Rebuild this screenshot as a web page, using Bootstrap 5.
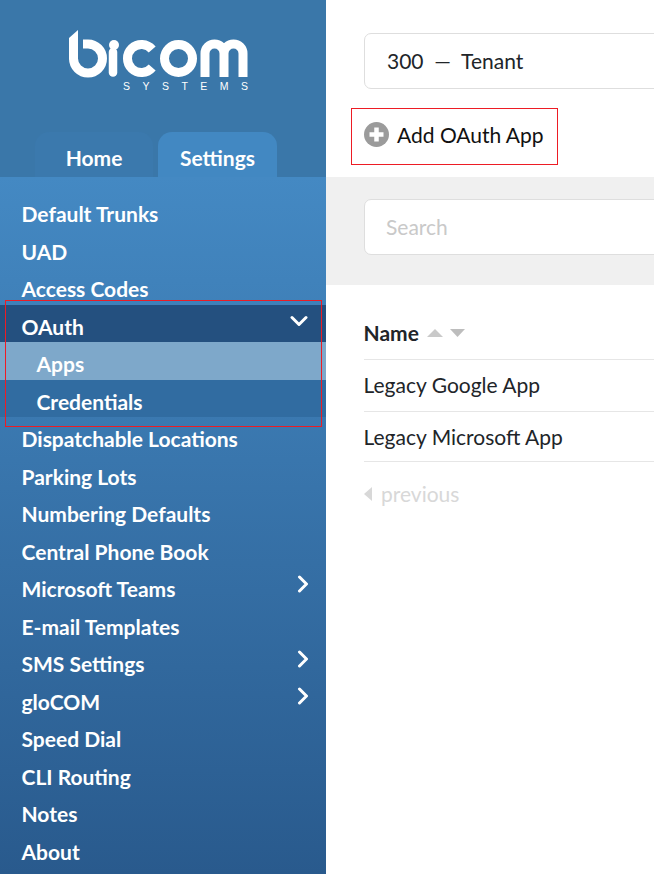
<!DOCTYPE html>
<html lang="en">
<head>
<meta charset="utf-8">
<title>OAuth Apps</title>
<link href="https://cdn.jsdelivr.net/npm/bootstrap@5.3.0/dist/css/bootstrap.min.css" rel="stylesheet">
<style>
html,body{height:100%;overflow:hidden}
body{font-family:Lato,"Liberation Sans",sans-serif;color:#212529;background:#fff}
.shell{height:874px;width:654px;overflow:hidden}
.side{width:326px;flex:none;position:relative;background:#3a77a9}
.brand{height:132px;padding-top:30px;padding-left:68px}
.brand svg{display:block}
.tabs-row{height:45px;padding-left:35px;gap:5px}
.side-tab{width:118px;height:45px;border-radius:14px 14px 0 0;color:#fff;font-weight:700;font-size:21px;line-height:52px;text-align:center;text-decoration:none;background:#3b79ad}
.side-tab.on{background:#4288c2;width:119px}
.menu-wrap{height:697px;padding-top:15px;background:linear-gradient(#4489c3,#295a8d)}
.menu-item{height:37.5px;line-height:30.5px;padding:7px 17px 0 21.5px;font-size:21px;font-weight:700;color:#fff;text-decoration:none;display:flex;justify-content:space-between;align-items:center}
.menu-item svg{flex:none;margin-top:-11px}
.menu-item.open{background:#24507f;padding-right:18px}
.menu-item.sub{padding-left:36.5px}
.menu-item.cur{background:#7ea8ca}
.menu-item.alt{background:#316ca1}
.redbox{position:absolute;border:1px solid #ed1c24;pointer-events:none}
.rb-a{left:5px;top:300px;width:317px;height:127px}
.rb-b{left:351px;top:108px;width:207px;height:57px}
.main-col{flex:1;position:relative;min-width:0}
.top-zone{height:177px;padding:33px 0 0 38px}
.pick{height:56px;margin-right:-20px;border:1px solid #dedede;border-radius:7px;padding-left:22px;font-size:21px;line-height:53px;color:#212529}
.add-row{margin-top:31px;gap:8px;font-size:21px;line-height:30px;color:#111;text-decoration:none;height:30px}
.add-row svg{margin-top:-2px}
.search-zone{height:108px;background:#f0f0f0;padding:22px 0 0 38px}
.finder{height:56px;margin-right:-20px;border:1px solid #dedede;border-radius:7px;background:#fff;padding-left:21px;font-size:21px;line-height:53px;color:#c9c9c9}
.list-zone{padding:0 0 0 38px}
.hdr{height:75px;border-bottom:1px solid #e6e6e6;font-weight:700;font-size:21px;align-items:center;gap:8px;padding-top:21px}
.hdr span{margin-left:-.5px}
.hdr svg{flex:none}
.line{height:52px;border-bottom:1px solid #e6e6e6;font-size:21px;line-height:49px;text-indent:-.5px}
.line.b{height:50px;line-height:50px}
.prev{margin-top:18px;font-size:21px;line-height:28px;color:#d8d8d8;gap:9px;align-items:center}
</style>
</head>
<body>
<div class="shell d-flex">
  <nav class="side">
    <div class="brand">
      <svg width="182" height="64" viewBox="0 0 182 64" role="img" aria-label="Bicom Systems logo">
        <path d="M1 8 L10 0 V29.500 H1Z" fill="#fff"/>
        <g fill="none" stroke="#fff" stroke-width="9">
          <path d="M15 14 H20 A14.500 14.500 0 1 1 5.500 28.500"/>
          <path d="M45 22 V42.500" stroke-width="8.500" stroke-linecap="round"/>
          <path d="M84.200 19.500 A14 14 0 1 0 84.200 37.500"/>
          <circle cx="110.500" cy="28.500" r="14"/>
          <path d="M137 47 V23.500 A9.500 9.500 0 0 1 156 23.500 V47 M156 23.500 A9.500 9.500 0 0 1 175 23.500 V47"/>
        </g>
        <circle cx="46" cy="15" r="5" fill="#fff"/>
        <text x="55" y="60" font-family="Liberation Sans, sans-serif" font-size="10.500" fill="#fff" textLength="125" lengthAdjust="spacing">SYSTEMS</text>
      </svg>
    </div>
    <div class="tabs-row d-flex">
      <a class="side-tab" href="#">Home</a>
      <a class="side-tab on" href="#">Settings</a>
    </div>
    <div class="menu-wrap">
      <a class="menu-item" href="#">Default Trunks</a>
      <a class="menu-item" href="#">UAD</a>
      <a class="menu-item" href="#">Access Codes</a>
      <a class="menu-item open" href="#">OAuth
        <svg width="18" height="12" viewBox="0 0 18 12"><path d="M2 2.500 L9 9.500 L16 2.500" fill="none" stroke="#fff" stroke-width="3" stroke-linecap="round" stroke-linejoin="round"/></svg></a>
      <a class="menu-item sub cur" href="#">Apps</a>
      <a class="menu-item sub alt" href="#">Credentials</a>
      <a class="menu-item" href="#">Dispatchable Locations</a>
      <a class="menu-item" href="#">Parking Lots</a>
      <a class="menu-item" href="#">Numbering Defaults</a>
      <a class="menu-item" href="#">Central Phone Book</a>
      <a class="menu-item" href="#">Microsoft Teams
        <svg width="12" height="18" viewBox="0 0 12 18"><path d="M2.500 2 L9.500 9 L2.500 16" fill="none" stroke="#fff" stroke-width="3" stroke-linecap="round" stroke-linejoin="round"/></svg></a>
      <a class="menu-item" href="#">E-mail Templates</a>
      <a class="menu-item" href="#">SMS Settings
        <svg width="12" height="18" viewBox="0 0 12 18"><path d="M2.500 2 L9.500 9 L2.500 16" fill="none" stroke="#fff" stroke-width="3" stroke-linecap="round" stroke-linejoin="round"/></svg></a>
      <a class="menu-item" href="#">gloCOM
        <svg width="12" height="18" viewBox="0 0 12 18"><path d="M2.500 2 L9.500 9 L2.500 16" fill="none" stroke="#fff" stroke-width="3" stroke-linecap="round" stroke-linejoin="round"/></svg></a>
      <a class="menu-item" href="#">Speed Dial</a>
      <a class="menu-item" href="#">CLI Routing</a>
      <a class="menu-item" href="#">Notes</a>
      <a class="menu-item" href="#">About</a>
    </div>
  </nav>
  <main class="main-col">
    <div class="top-zone">
      <div class="pick">300 &nbsp;—&nbsp; Tenant</div>
      <a class="add-row d-flex align-items-center" href="#">
        <svg width="25" height="25" viewBox="0 0 25 25"><circle cx="12.500" cy="12.500" r="12.500" fill="#9b9b9b"/><path d="M12.500 5.500 V19.500 M5.500 12.500 H19.500" stroke="#fff" stroke-width="4.500"/></svg>
        <span>Add OAuth App</span>
      </a>
    </div>
    <div class="search-zone"><div class="finder">Search</div></div>
    <div class="list-zone">
      <div class="hdr d-flex">
        <span>Name</span>
        <svg width="38" height="10" viewBox="0 0 38 10"><path d="M0 9 L8 1 L16 9Z" fill="#c9c9c9"/><path d="M23 1 H38 L30.500 9Z" fill="#bdbdbd"/></svg>
      </div>
      <div class="line">Legacy Google App</div>
      <div class="line b">Legacy Microsoft App</div>
      <div class="prev d-flex">
        <svg width="8" height="14" viewBox="0 0 8 14"><path d="M8 0 V14 L0 7Z" fill="#d8d8d8"/></svg>
        <span>previous</span>
      </div>
    </div>
  </main>
  <div class="redbox rb-a"></div>
  <div class="redbox rb-b"></div>
</div>
<script src="https://cdn.jsdelivr.net/npm/bootstrap@5.3.0/dist/js/bootstrap.bundle.min.js"></script>
</body>
</html>
